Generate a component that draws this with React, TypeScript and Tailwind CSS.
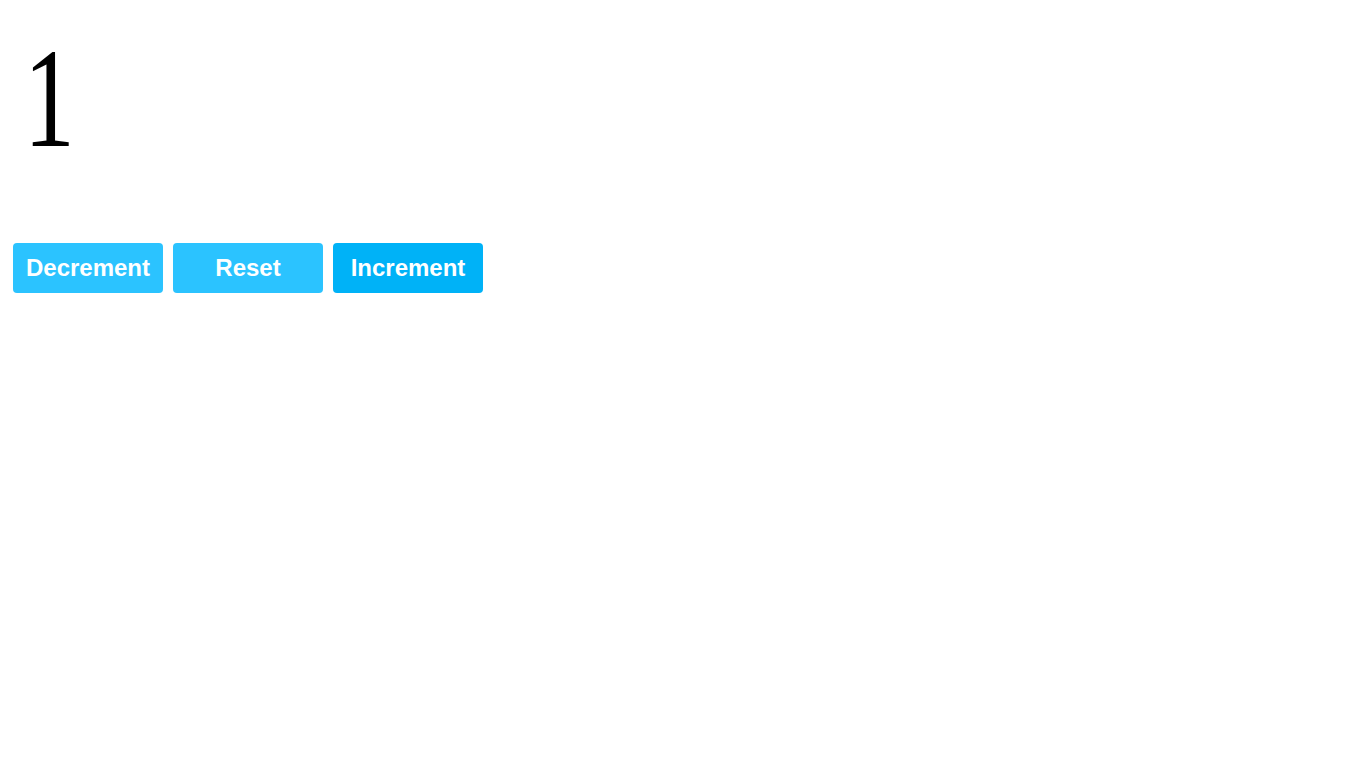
import { useState } from "react"

export default function App() {
  const [count, setCount] = useState(1)

  return (
    <main className="min-h-screen bg-white p-[13px]">
      <div className="mt-[14px] text-[142px] leading-none text-black" style={{ fontFamily: '"Liberation Serif", serif' }}>
        <span className="inline-block origin-left scale-x-[0.72] pl-[15px]">{count}</span>
      </div>
      <div className="mt-[74px] flex gap-[10px]" style={{ fontFamily: '"Liberation Sans", Arial, sans-serif' }}>
        <button
          onClick={() => setCount(count - 1)}
          className="flex h-[50px] w-[150px] items-center justify-center rounded-[4px] bg-[#2bc3ff] text-[24px] font-bold text-white"
        >
          Decrement
        </button>
        <button
          onClick={() => setCount(0)}
          className="flex h-[50px] w-[150px] items-center justify-center rounded-[4px] bg-[#2bc3ff] text-[24px] font-bold text-white"
        >
          Reset
        </button>
        <button
          onClick={() => setCount(count + 1)}
          className="flex h-[50px] w-[150px] items-center justify-center rounded-[4px] bg-[#00b2f7] text-[24px] font-bold text-white"
        >
          Increment
        </button>
      </div>
    </main>
  )
}
